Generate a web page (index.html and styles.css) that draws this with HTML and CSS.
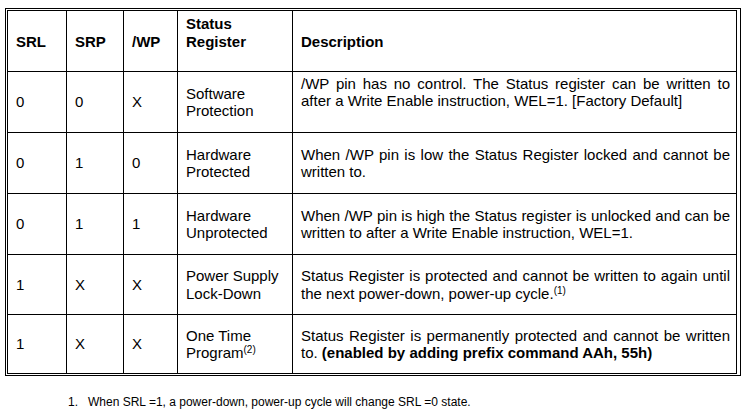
FILE: index.html
```html
<!DOCTYPE html>
<html>
<head>
<meta charset="utf-8">
<link rel="stylesheet" href="styles.css">
</head>
<body>
<div class="frame">
<table class="sr">
  <colgroup>
    <col class="c1"><col class="c2"><col class="c3"><col class="c4"><col class="c5">
  </colgroup>
  <thead>
    <tr class="hrow">
      <th>SRL</th><th>SRP</th><th>/WP</th><th>Status<br>Register</th><th>Description</th>
    </tr>
  </thead>
  <tbody>
    <tr class="r61">
      <td>0</td><td>0</td><td>X</td><td>Software<br>Protection</td>
      <td class="desc lift">/WP pin has no control. The Status register can be written to after a Write Enable instruction, WEL=1. [Factory Default]</td>
    </tr>
    <tr class="r61">
      <td>0</td><td>1</td><td>0</td><td>Hardware<br>Protected</td>
      <td class="desc">When /WP pin is low the Status Register locked and cannot be written to.</td>
    </tr>
    <tr class="r61">
      <td>0</td><td>1</td><td>1</td><td>Hardware<br>Unprotected</td>
      <td class="desc">When /WP pin is high the Status register is unlocked and can be written to after a Write Enable instruction, WEL=1.</td>
    </tr>
    <tr class="r60">
      <td>1</td><td>X</td><td>X</td><td>Power Supply<br>Lock-Down</td>
      <td class="desc">Status Register is protected and cannot be written to again until the next power-down, power-up cycle.<sup>(1)</sup></td>
    </tr>
    <tr class="r59">
      <td>1</td><td>X</td><td>X</td><td>One Time<br>Program<sup>(2)</sup></td>
      <td class="desc">Status Register is permanently protected and cannot be written to. <b>(enabled by adding prefix command AAh, 55h)</b></td>
    </tr>
  </tbody>
</table>
</div>
<div class="notes">
  <div class="note"><span class="num">1.</span><span>When SRL =1, a power-down, power-up cycle will change SRL =0 state.</span></div>
</div>
</body>
</html>
```
FILE: styles.css
```css
html, body {
  margin: 0;
  padding: 0;
  background: #fff;
}
body {
  font-family: "Liberation Sans", Arial, sans-serif;
  color: #000;
}
.frame {
  width: 732px;
  margin: 8px 0 0 5px;
  border: 1px solid #000;
  padding: 1px;
}
.sr {
  width: 730px;
  border-collapse: collapse;
  table-layout: fixed;
  font-size: 15px;
  line-height: 17.3px;
}
.c1 { width: 59px; }
.c2 { width: 57px; }
.c3 { width: 54px; }
.c4 { width: 115px; }
.sr th, .sr td {
  border: 1px solid #000;
  padding: 0 6px 0 8px;
  text-align: left;
}
.sr th {
  font-weight: bold;
  vertical-align: bottom;
  padding-bottom: 21px;
}
.hrow { height: 61px; }
.sr td { vertical-align: middle; }
.r61 { height: 61px; }
.r60 { height: 60px; }
.r59 { height: 59px; }
.sr td.desc { text-align: justify; }
.sr td.lift { padding-bottom: 20px; }
sup {
  font-size: 10px;
  line-height: 0;
  vertical-align: 5px;
}
.notes {
  margin: 19px 0 0 68px;
  font-size: 12px;
}
.note {
  display: flex;
}
.num {
  width: 20px;
}
```
